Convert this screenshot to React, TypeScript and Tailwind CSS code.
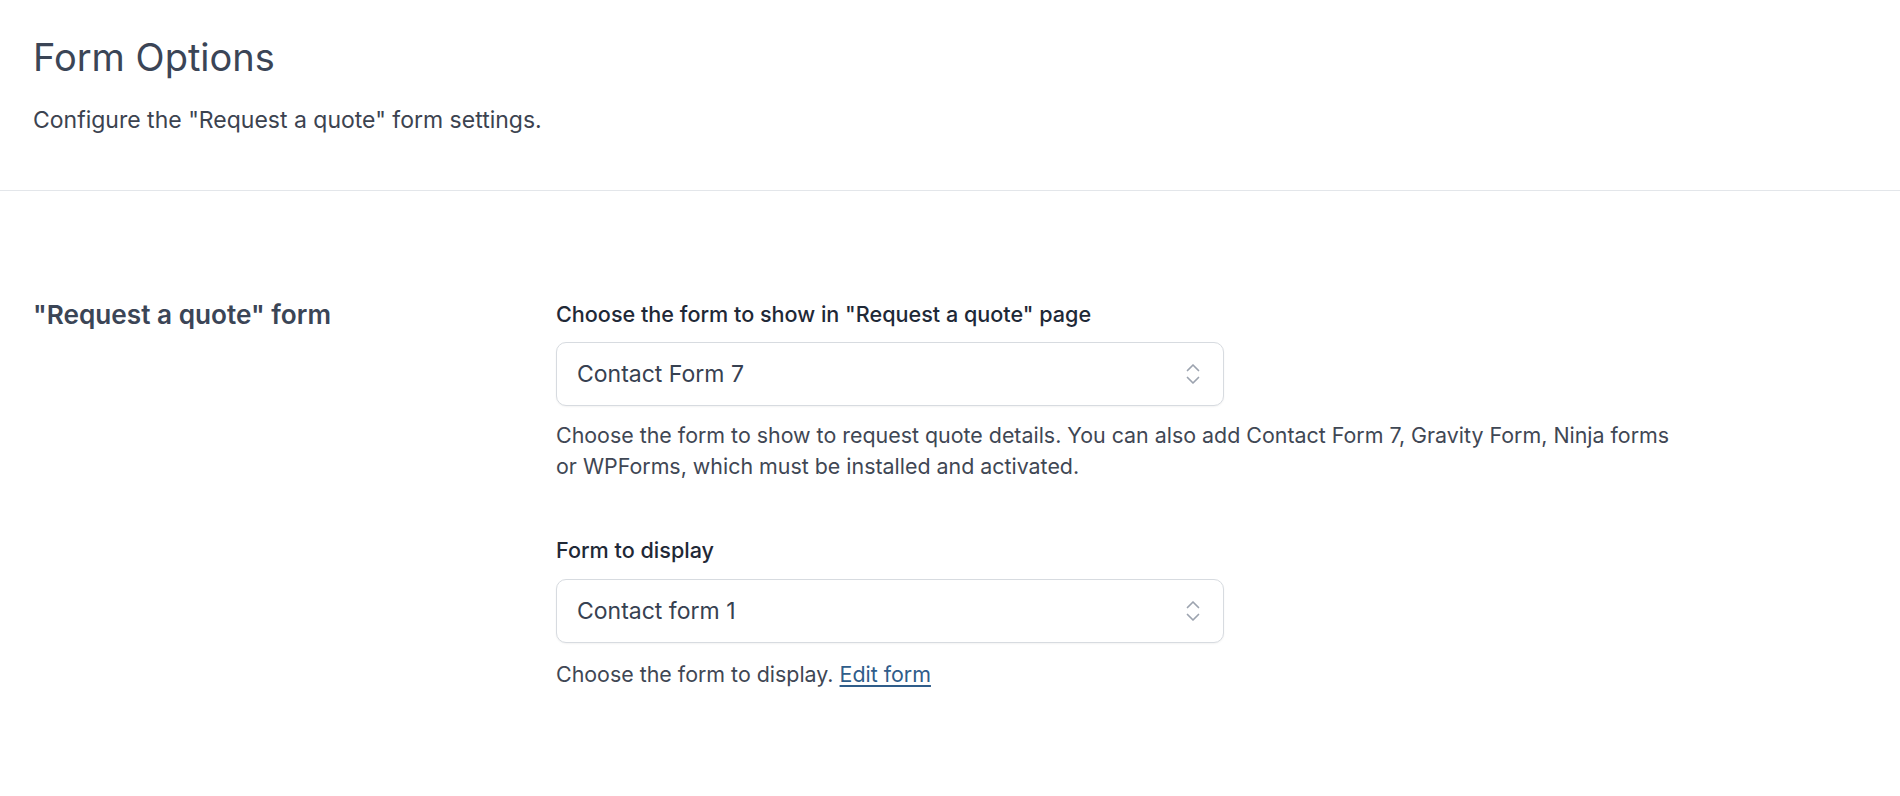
function Chevrons() {
  return (
    <svg width="18" height="28" viewBox="0 0 18 28" fill="none" className="shrink-0">
      <path d="M3.5 10.5 9 5l5.5 5.5" stroke="#9ca3af" strokeWidth="1.7" strokeLinecap="round" strokeLinejoin="round" />
      <path d="M3.5 17.5 9 23l5.5-5.5" stroke="#9ca3af" strokeWidth="1.7" strokeLinecap="round" strokeLinejoin="round" />
    </svg>
  );
}

function Select({ value }: { value: string }) {
  return (
    <div className="flex h-[64px] w-[668px] items-center justify-between rounded-[10px] border border-[#d7dbe0] bg-white pl-[20px] pr-[21px] shadow-[0_1px_2px_rgba(0,0,0,0.05)]">
      <span className="text-[23px] leading-none text-[#374151]">{value}</span>
      <Chevrons />
    </div>
  );
}

export default function App() {
  return (
    <div className="min-h-screen bg-white font-['Inter',sans-serif] text-[#374151]">
      <header className="border-b border-[#e3e6ea] px-[33px] pt-[35px] pb-[54px]">
        <h1 className="text-[38px] leading-[44px] font-normal text-[#3b4556]">Form Options</h1>
        <p className="mt-[26px] text-[23px] leading-[31px] text-[#3c4350]">
          Configure the "Request a quote" form settings.
        </p>
      </header>

      <section className="flex px-[33px] pt-[109px]">
        <div className="w-[523px] shrink-0">
          <h2 className="text-[26.2px] leading-[29px] font-semibold text-[#3b4556]">"Request a quote" form</h2>
        </div>

        <div className="w-[1125px]">
          <div>
            <label className="block text-[21.6px] leading-[29px] font-medium text-[#1f2937]">
              Choose the form to show in "Request a quote" page
            </label>
            <div className="mt-[13px]">
              <Select value="Contact Form 7" />
            </div>
            <p className="mt-[14px] text-[21.4px] leading-[31px] text-[#3f4754]">
              Choose the form to show to request quote details. You can also add Contact Form 7, Gravity Form, Ninja forms or WPForms, which must be installed and activated.
            </p>
          </div>

          <div className="mt-[54px]">
            <label className="block text-[21.6px] leading-[29px] font-medium text-[#1f2937]">Form to display</label>
            <div className="mt-[14px]">
              <Select value="Contact form 1" />
            </div>
            <p className="mt-[16px] text-[21.4px] leading-[31px] text-[#3f4754]">
              Choose the form to display.{' '}
              <a href="#" className="text-[#2f5d8a] underline underline-offset-[3px]">
                Edit form
              </a>
            </p>
          </div>
        </div>
      </section>
    </div>
  );
}
